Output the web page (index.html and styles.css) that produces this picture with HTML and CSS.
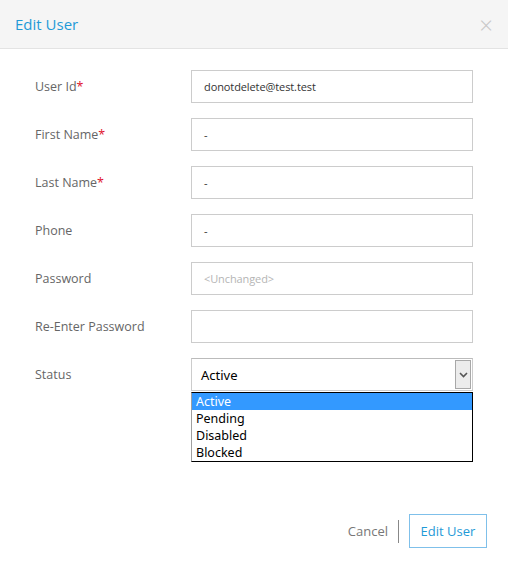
FILE: index.html
```html
<!DOCTYPE html>
<html>
<head>
<meta charset="utf-8">
<link rel="stylesheet" href="styles.css">
</head>
<body>
<div class="modal">
  <div class="header">
    <span class="title">Edit User</span>
    <span class="close">&times;</span>
  </div>
  <div class="form">
    <div class="row">
      <label class="label">User Id<span class="req">*</span></label>
      <div class="input">donotdelete@test.test</div>
    </div>
    <div class="row">
      <label class="label">First Name<span class="req">*</span></label>
      <div class="input">-</div>
    </div>
    <div class="row">
      <label class="label">Last Name<span class="req">*</span></label>
      <div class="input">-</div>
    </div>
    <div class="row">
      <label class="label">Phone</label>
      <div class="input">-</div>
    </div>
    <div class="row">
      <label class="label">Password</label>
      <div class="input placeholder">&lt;Unchanged&gt;</div>
    </div>
    <div class="row">
      <label class="label">Re-Enter Password</label>
      <div class="input"></div>
    </div>
    <div class="row">
      <label class="label">Status</label>
      <div class="select-wrap">
        <div class="select">
          <span class="select-value">Active</span>
          <span class="select-btn">
            <svg width="9" height="6" viewBox="0 0 9 6"><path d="M1 1 L4.5 4.5 L8 1" fill="none" stroke="#555" stroke-width="1.6"/></svg>
          </span>
        </div>
        <ul class="options">
          <li class="option selected">Active</li>
          <li class="option">Pending</li>
          <li class="option">Disabled</li>
          <li class="option">Blocked</li>
        </ul>
      </div>
    </div>
  </div>
  <div class="footer">
    <span class="cancel">Cancel</span>
    <span class="sep"></span>
    <button class="btn">Edit User</button>
  </div>
</div>
</body>
</html>
```
FILE: styles.css
```css
* { box-sizing: border-box; }
html, body { margin: 0; padding: 0; background: #fff; }
body {
  font-family: "Open Sans", "Noto Sans", sans-serif;
  width: 508px;
  height: 564px;
}
.modal { display: flex; flex-direction: column; height: 564px; }
.header {
  height: 49px;
  background: #f5f5f5;
  border-bottom: 1px solid #e3e3e3;
  display: flex;
  align-items: center;
  justify-content: space-between;
  padding: 0 15px 0 15px;
}
.title { color: #1f9ad7; font-size: 15px; margin-top: -1px; }
.close { color: #c8c8c8; font-size: 24px; font-weight: 300; line-height: 1; margin-top: 2px; }
.form {
  display: flex;
  flex-direction: column;
  gap: 15px;
  padding: 21px 35px 0 35px;
}
.row { display: grid; grid-template-columns: 156px 282px; align-items: center; height: 33px; }
.label { color: #666; font-size: 12.5px; }
.req { color: #e0112b; }
.input {
  height: 33px;
  border: 1px solid #ccc;
  padding: 0 12px;
  font-size: 11px;
  letter-spacing: -0.1px;
  color: #333;
  display: flex;
  align-items: center;
}
.placeholder { color: #b5b5b5; }
.select-wrap { position: relative; height: 33px; }
.select {
  height: 33px;
  border: 1px solid #ccc;
  border-top-color: #bbb;
  display: flex;
  align-items: stretch;
  justify-content: space-between;
  padding: 0 0 0 9px;
}
.select-value { display: flex; align-items: center; font-size: 13px; color: #000; font-family: "Noto Sans", "Open Sans", sans-serif; }
.select-btn {
  width: 16px;
  margin: 1px 1px 1px 0;
  background: #ececec;
  border: 1px solid #a8a8a8;
  display: flex;
  align-items: center;
  justify-content: center;
}
.options {
  position: absolute;
  top: 34px;
  left: 0;
  width: 282px;
  margin: 0;
  padding: 0;
  list-style: none;
  background: #fff;
  border: 1px solid #000;
  border-left: 1px solid #a0a0a0;
  font-family: "Noto Sans", "Open Sans", sans-serif;
  font-size: 12.5px;
  color: #000;
}
.option { height: 17px; line-height: 17px; padding-left: 4px; }
.option.selected { background: #3399ff; color: #fff; }
.footer {
  margin-top: auto;
  margin-bottom: 16px;
  display: flex;
  align-items: center;
  justify-content: flex-end;
  padding-right: 21px;
}
.cancel { color: #777; font-size: 13px; }
.sep { width: 1px; height: 23px; background: #888; margin: 0 10px 0 10px; }
.btn {
  height: 34px;
  width: 78px;
  border: 1px solid #7fc0ea;
  background: #fff;
  color: #1f9ad7;
  font-family: "Open Sans", "Noto Sans", sans-serif;
  font-size: 13px;
  padding: 0;
}
```
